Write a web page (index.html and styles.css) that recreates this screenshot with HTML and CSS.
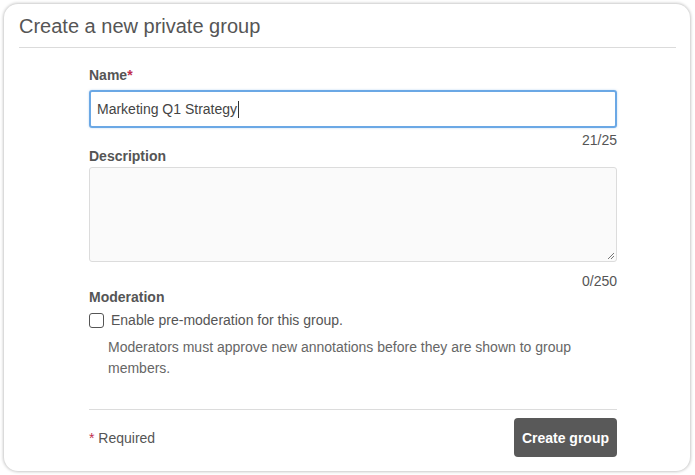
FILE: index.html
```html
<!DOCTYPE html>
<html>
<head>
<meta charset="utf-8">
<link rel="stylesheet" href="styles.css">
</head>
<body>
<div class="card">
  <div class="header"><h1 class="title">Create a new private group</h1></div>
  <form class="form">
    <label class="label">Name<span class="req">*</span></label>
    <div class="input">Marketing Q1 Strategy<span class="caret"></span></div>
    <div class="counter">21/25</div>
    <label class="label">Description</label>
    <div class="textarea">
      <svg class="grip" width="9" height="9" viewBox="0 0 9 9"><path d="M8 2 L2 8 M8 5 L5 8" stroke="#777" stroke-width="1"/></svg>
    </div>
    <div class="counter counter2">0/250</div>
    <label class="label">Moderation</label>
    <div class="check-row"><span class="checkbox"></span><span class="check-label">Enable pre-moderation for this group.</span></div>
    <p class="help">Moderators must approve new annotations before they are shown to group members.</p>
    <div class="footer">
      <span class="required"><span class="req">*</span> Required</span>
      <button type="button" class="btn">Create group</button>
    </div>
  </form>
</div>
</body>
</html>
```
FILE: styles.css
```css
html, body { margin: 0; padding: 0; background: #fff; }
body { font-family: "Liberation Sans", Arial, sans-serif; color: #444; width: 695px; height: 475px; overflow: hidden; }
.card {
  margin: 4px 5px 0 4px;
  height: 467px;
  box-sizing: border-box;
  border-radius: 14px;
  box-shadow: 0 0 3px 1px rgba(0,0,0,0.22);
  padding: 0 14px 0 15px;
}
.header { padding: 11px 0 9px; border-bottom: 1px solid #dbdbdb; }
.title { margin: 0; font-size: 20px; font-weight: normal; color: #555; line-height: 23px; }
.form { display: flex; flex-direction: column; margin: 19px 59px 0 70px; }
.label { font-size: 14px; font-weight: bold; color: #555; line-height: 16px; }
.req { color: #c0304d; }
.input {
  margin-top: 7px;
  height: 38px; box-sizing: border-box;
  border: 2px solid #6ba8e5; border-radius: 3px;
  padding: 0 6px; font-size: 14px; line-height: 34px; color: #444;
  display: flex; align-items: center;
  box-shadow: 0 0 2px rgba(107,168,229,0.5);
}
.caret { display: inline-block; width: 1px; height: 17px; background: #333; margin-left: 1px; }
.counter { text-align: right; font-size: 14px; line-height: 16px; color: #555; margin-top: 4px; }
.textarea {
  margin-top: 3px;
  height: 95px; box-sizing: border-box;
  border: 1px solid #dcdcdc; border-radius: 3px; background: #fafafa;
  position: relative;
}
.grip { position: absolute; right: 1px; bottom: 1px; }
.counter2 { margin-top: 11px; }
.check-row { display: flex; align-items: center; margin-top: 7px; height: 16px; }
.checkbox { width: 13px; height: 13px; border: 1px solid #555; border-radius: 3px; box-sizing: content-box; }
.check-label { margin-left: 7px; font-size: 14px; color: #555; }
.help { margin: 9px 0 0 19px; font-size: 14px; line-height: 21px; color: #666; }
.footer {
  margin-top: 30px; border-top: 1px solid #dcdcdc; padding-top: 8px;
  display: flex; justify-content: space-between; align-items: center;
}
.required { font-size: 14px; color: #555; }
.btn {
  height: 39px; padding: 0 8px; border: none; border-radius: 4px;
  background: #595959; color: #fff; font-family: "Liberation Sans", Arial, sans-serif;
  font-size: 14px; font-weight: bold;
}
```
